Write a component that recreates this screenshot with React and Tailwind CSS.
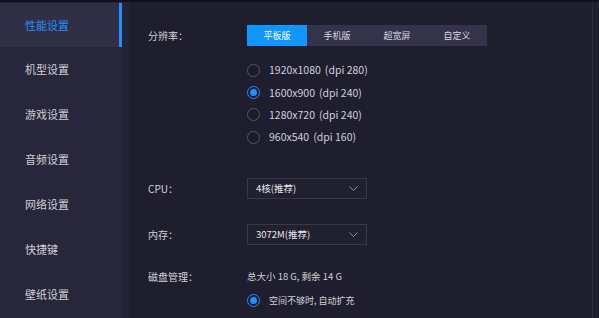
import React from "react";

const font = { fontFamily: '"Noto Sans CJK SC", "Noto Sans", sans-serif' };

const navItems = ["性能设置", "机型设置", "游戏设置", "音频设置", "网络设置", "快捷键", "壁纸设置"];
const tabs = ["平板版", "手机版", "超宽屏", "自定义"];
const resolutions = [
  ["1920x1080", "(dpi 280)", false],
  ["1600x900", "(dpi 240)", true],
  ["1280x720", "(dpi 240)", false],
  ["960x540", "(dpi 160)", false],
];

function Radio({ checked }) {
  return checked ? (
    <span className="flex h-[13px] w-[13px] shrink-0 items-center justify-center rounded-full border-[1.5px] border-[#1e90ff] bg-[#1a1930]">
      <span className="h-[7px] w-[7px] rounded-full bg-[#1e90ff]" />
    </span>
  ) : (
    <span className="h-[13px] w-[13px] shrink-0 rounded-full border border-[#55546a] bg-[#1c1b2c]" />
  );
}

function Select({ value }) {
  return (
    <div className="flex h-[21px] w-[120px] items-center justify-between border border-[#38374d] bg-[#21202f] pl-[8px] pr-[8px]">
      <span className="text-[9.5px] text-[#e6e6ee]">{value}</span>
      <svg width="9" height="5" viewBox="0 0 9 5" fill="none">
        <path d="M0.5 0.5l4 4 4-4" stroke="#8a8a9c" strokeWidth="1" />
      </svg>
    </div>
  );
}

export default function App() {
  return (
    <div className="flex h-[318px] w-[599px] flex-col overflow-hidden bg-[#1f1e2f]" style={font}>
      <div className="h-[2px] w-full bg-[#100f22]" />
      <div className="flex flex-1">
        <div className="flex w-[122px] flex-col bg-[#27263a] pt-[1px]">
          {navItems.map((t, i) => (
            <div
              key={t}
              className={
                i === 0
                  ? "flex h-[44px] items-center border-r-[3px] border-[#1e90ff] bg-[#302f46] pl-[25px] text-[11px] text-[#1e90ff]"
                  : "flex h-[45px] items-center pl-[25px] text-[11px] text-[#cfcfd8]"
              }
            >
              {t}
            </div>
          ))}
        </div>
        <div className="w-[8px] bg-[#242335]" />
        <div className="flex flex-1 flex-col pl-[18px] text-[10px] text-[#d0d0d8]">
          <div className="mt-[23px] flex h-[21px] items-center">
            <span className="w-[99px]">分辨率：</span>
            <div className="flex bg-[#34334a]">
              {tabs.map((t, i) => (
                <div
                  key={t}
                  className={
                    i === 0
                      ? "flex h-[21px] w-[60px] items-center justify-center bg-[#1296ff] text-[9px] text-white"
                      : "flex h-[21px] w-[60px] items-center justify-center text-[9px] text-[#d8d8e2]"
                  }
                >
                  {t}
                </div>
              ))}
            </div>
          </div>
          <div className="ml-[99px] mt-[13px] flex flex-col">
            {resolutions.map(([a, b, c]) => (
              <div key={a} className="flex h-[22.4px] items-center gap-[9px]">
                <Radio checked={c} />
                <span className="text-[10.5px] text-[#d0d0d8]">
                  {a}
                  <span className="ml-[4px]">{b}</span>
                </span>
              </div>
            ))}
          </div>
          <div className="mt-[29px] flex h-[21px] items-center">
            <span className="w-[99px]">CPU：</span>
            <Select value="4核(推荐)" />
          </div>
          <div className="mt-[25px] flex h-[21px] items-center">
            <span className="w-[99px]">内存：</span>
            <Select value="3072M(推荐)" />
          </div>
          <div className="mt-[22px] flex h-[20px] items-center">
            <span className="w-[99px]">磁盘管理：</span>
            <span className="text-[9.5px]">总大小 18 G, 剩余 14 G</span>
          </div>
          <div className="ml-[99px] mt-[4px] flex h-[20px] items-center gap-[9px]">
            <Radio checked />
            <span className="text-[9px]">空间不够时, 自动扩充</span>
          </div>
        </div>
        <div className="w-[7px] border-l border-[#2a2940] bg-[#201f30]" />
      </div>
    </div>
  );
}
